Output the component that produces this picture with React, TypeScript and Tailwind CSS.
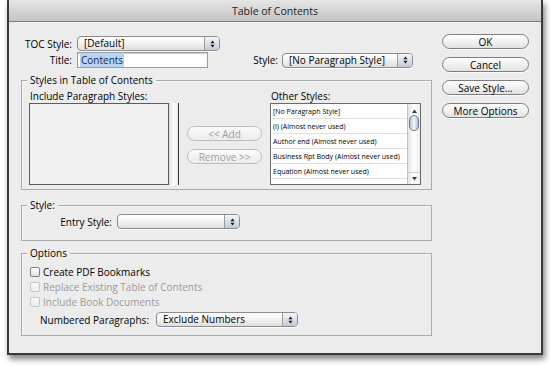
import React from 'react';

function Stepper() {
  return (
    <div className="flex w-[15px] shrink-0 items-center justify-center rounded-r-[3px] border-l border-[#9a9ca4] bg-gradient-to-b from-[#f2f4f8] via-[#dde2ea] to-[#c2c9d5]">
      <svg width="5" height="8" viewBox="0 0 5 8">
        <path d="M0.4 3.2 L2.5 0.6 L4.6 3.2 Z" fill="#1a1a1a" />
        <path d="M0.4 4.8 L2.5 7.4 L4.6 4.8 Z" fill="#1a1a1a" />
      </svg>
    </div>
  );
}

function Popup({ width, text }: { width: string; text?: string }) {
  return (
    <div
      className={`flex h-[15px] shrink-0 rounded-[4px] border border-[#8c8c8c] bg-gradient-to-b from-white via-[#f2f2f2] to-[#dedede] shadow-[0_1px_0_rgba(255,255,255,0.9)] ${width}`}
    >
      <div className="flex-1 truncate pl-[6px] leading-[13px] text-black">{text}</div>
      <Stepper />
    </div>
  );
}

function AquaButton({ label, disabled }: { label: string; disabled?: boolean }) {
  return (
    <div
      className={
        disabled
          ? 'flex h-[15px] items-center justify-center rounded-full border border-[#bdbdbd] bg-gradient-to-b from-[#fbfbfb] to-[#ebebeb] text-[#9d9d9d]'
          : 'flex h-[15px] items-center justify-center rounded-full border border-[#7e7e7e] bg-gradient-to-b from-white via-[#f1f1f1] to-[#e2e2e2] font-medium text-black shadow-[0_1px_0_rgba(255,255,255,0.8)]'
      }
    >
      {label}
    </div>
  );
}

function Checkbox({ label, disabled }: { label: string; disabled?: boolean }) {
  return (
    <div className="flex h-[15px] items-center">
      <div
        className={
          disabled
            ? 'h-[10px] w-[10px] rounded-[2px] border border-[#c6c6c6] bg-gradient-to-b from-[#fafafa] to-[#ececec]'
            : 'h-[10px] w-[10px] rounded-[2px] border border-[#808080] bg-gradient-to-b from-white to-[#e2e2e2]'
        }
      />
      <span className={`ml-[3px] ${disabled ? 'text-[#9b9b9b]' : 'text-black'}`}>{label}</span>
    </div>
  );
}

function Group({ title, className, children }: { title: string; className: string; children: React.ReactNode }) {
  return (
    <div className={`relative border border-[#ababab] shadow-[inset_1px_1px_0_#f7f7f7] ${className}`}>
      <span className="absolute -top-[8px] left-[5px] bg-[#ececec] px-[3px] leading-[14px]">{title}</span>
      {children}
    </div>
  );
}

const otherStyles = [
  '[No Paragraph Style]',
  '(i) (Almost never used)',
  'Author end (Almost never used)',
  'Business Rpt Body (Almost never used)',
  'Equation (Almost never used)',
  '',
];

export default function App() {
  return (
    <div className="h-[366px] w-[550px] overflow-hidden bg-white font-['Open_Sans',sans-serif] text-[10px] leading-[14px] text-black">
      <div className="ml-[7px] flex h-[355px] w-[536px] flex-col border-x-2 border-b-2 border-[#3a3a3a] bg-[#ececec] shadow-[2px_4px_6px_rgba(0,0,0,0.5)]">
        {/* title bar */}
        <div className="flex h-[22px] shrink-0 items-center justify-center border-b border-[#7d7d7d] bg-gradient-to-b from-[#e6e6e6] to-[#c4c4c4] text-[10.5px] text-[#1e1e1e]">
          Table of Contents
        </div>

        <div className="flex pl-[12px]">
          {/* left column */}
          <div className="flex w-[411px] flex-col">
            <div className="mt-[14px] flex h-[15px] items-center">
              <span className="w-[51px] text-right">TOC Style:</span>
              <div className="ml-[5px]">
                <Popup width="w-[143px]" text="[Default]" />
              </div>
            </div>

            <div className="mt-[1px] flex h-[16px] items-center">
              <span className="w-[51px] text-right">Title:</span>
              <div className="ml-[5px] flex h-[16px] w-[131px] items-center border border-[#9b9b9b] bg-white pl-[2px] shadow-[inset_0_1px_1px_rgba(0,0,0,0.2)]">
                <span className="bg-[#b8d4f5] px-[1px] text-[#1b2a48]">Contents</span>
              </div>
              <span className="w-[70px] text-right">Style:</span>
              <div className="ml-[4px]">
                <Popup width="w-[131px]" text="[No Paragraph Style]" />
              </div>
            </div>

            {/* Styles in Table of Contents */}
            <Group title="Styles in Table of Contents" className="mt-[12px] h-[110px]">
              <div className="flex pl-[7px] pt-[8px]">
                <div className="flex flex-col">
                  <span className="h-[14px] pl-[1px]">Include Paragraph Styles:</span>
                  <div className="flex h-[82px] w-[150px]">
                    <div className="w-[140px] border border-[#5c5c5c] bg-[#efefef]" />
                    <div className="w-[10px] border-r border-[#333333] bg-gradient-to-r from-[#dcdcdc] via-white to-[#e9e9e9]" />
                  </div>
                </div>

                <div className="ml-[8px] flex w-[75px] flex-col">
                  <div className="mt-[37px]">
                    <AquaButton label="<< Add" disabled />
                  </div>
                  <div className="mt-[8px]">
                    <AquaButton label="Remove >>" disabled />
                  </div>
                </div>

                <div className="ml-[8px] flex flex-col">
                  <span className="h-[14px] pl-[1px]">Other Styles:</span>
                  <div className="flex h-[82px] w-[151px] overflow-hidden border border-[#6a6a6a] bg-white">
                    <div className="flex-1">
                      {otherStyles.map((s, i) => (
                        <div
                          key={i}
                          className="flex h-[15px] items-center border-b border-[#e2e2e2] pl-[2px] text-[7px] font-medium leading-[9px] text-black"
                        >
                          {s}
                        </div>
                      ))}
                    </div>
                    <div className="flex w-[13px] flex-col border-l border-[#c4c4c4] bg-gradient-to-r from-[#e4e4e4] via-white to-[#ececec]">
                      <div className="flex h-[9px] items-end justify-center">
                        <svg width="5" height="4" viewBox="0 0 5 4">
                          <path d="M0 4 L2.5 0.5 L5 4 Z" fill="#3a3a3a" />
                        </svg>
                      </div>
                      <div className="mx-[1px] mt-[2px] h-[16px] rounded-full border border-[#6a7b96] bg-gradient-to-r from-[#b8c5d8] via-[#f2f5fa] to-[#aebdd2]" />
                      <div className="flex-1" />
                      <div className="flex h-[12px] items-center justify-center border-t border-[#d0d0d0]">
                        <svg width="5" height="4" viewBox="0 0 5 4">
                          <path d="M0 0 L2.5 3.5 L5 0 Z" fill="#3a3a3a" />
                        </svg>
                      </div>
                    </div>
                  </div>
                </div>
              </div>
            </Group>

            {/* Style */}
            <Group title="Style:" className="mt-[15px] h-[36px]">
              <div className="flex items-center pl-[7px] pt-[8px]">
                <span className="w-[83px] text-right">Entry Style:</span>
                <div className="ml-[5px]">
                  <Popup width="w-[123px]" />
                </div>
              </div>
            </Group>

            {/* Options */}
            <Group title="Options" className="mt-[12px] h-[83px]">
              <div className="flex flex-col pl-[8px] pt-[10px]">
                <Checkbox label="Create PDF Bookmarks" />
                <Checkbox label="Replace Existing Table of Contents" disabled />
                <Checkbox label="Include Book Documents" disabled />
                <div className="mt-[3px] flex items-center pl-[10px]">
                  <span className="w-[116px]">Numbered Paragraphs:</span>
                  <Popup width="w-[142px]" text="Exclude Numbers" />
                </div>
              </div>
            </Group>
          </div>

          {/* right column buttons */}
          <div className="ml-[10px] flex w-[87px] flex-col pt-[12px]">
            <AquaButton label="OK" />
            <div className="mt-[8px]">
              <AquaButton label="Cancel" />
            </div>
            <div className="mt-[8px]">
              <AquaButton label="Save Style..." />
            </div>
            <div className="mt-[8px]">
              <AquaButton label="More Options" />
            </div>
          </div>
        </div>
      </div>
    </div>
  );
}
